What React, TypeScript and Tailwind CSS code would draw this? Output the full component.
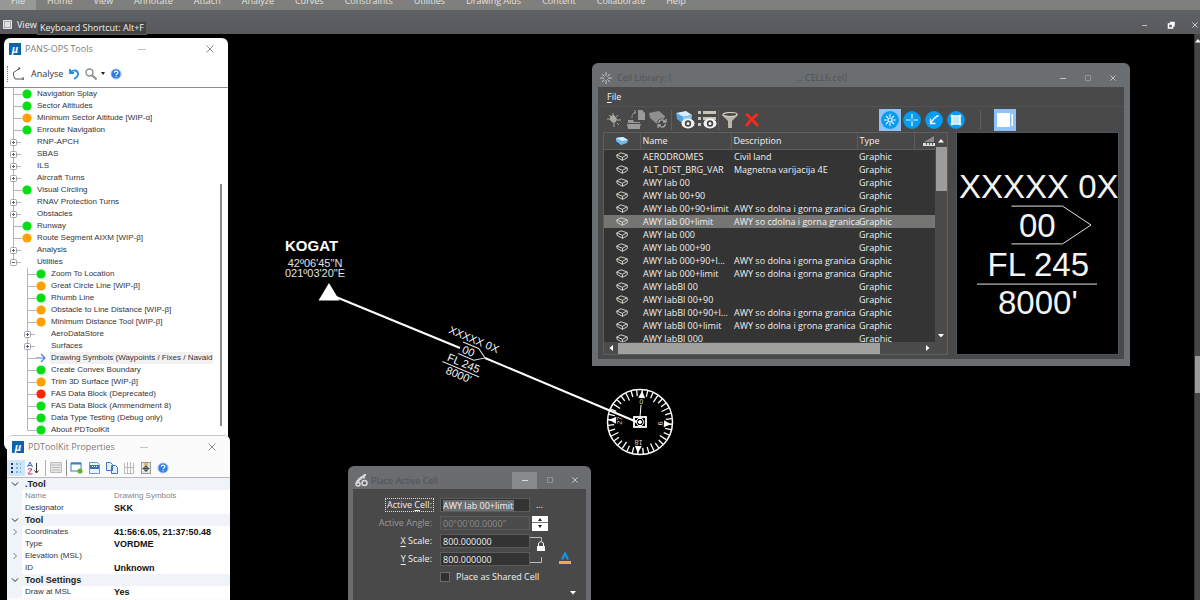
import { useState, type ReactNode } from "react";

const menuItems = [
  "Home", "View", "Annotate", "Attach", "Analyze", "Curves", "Constraints",
  "Utilities", "Drawing Aids", "Content", "Collaborate", "Help",
];

type TreeRow = {
  label: string;
  level?: number;
  kind: "green" | "orange" | "red" | "arrow" | "closed" | "open";
};

const tree: TreeRow[] = [
  { label: "Navigation Splay", kind: "green" },
  { label: "Sector Altitudes", kind: "green" },
  { label: "Minimum Sector Altitude [WIP-α]", kind: "orange" },
  { label: "Enroute Navigation", kind: "green" },
  { label: "RNP-APCH", kind: "closed" },
  { label: "SBAS", kind: "closed" },
  { label: "ILS", kind: "closed" },
  { label: "Aircraft Turns", kind: "closed" },
  { label: "Visual Circling", kind: "green" },
  { label: "RNAV Protection Turns", kind: "closed" },
  { label: "Obstacles", kind: "closed" },
  { label: "Runway", kind: "green" },
  { label: "Route Segment AIXM [WIP-β]", kind: "orange" },
  { label: "Analysis", kind: "closed" },
  { label: "Utilities", kind: "open" },
  { label: "Zoom To Location", level: 1, kind: "green" },
  { label: "Great Circle Line [WIP-β]", level: 1, kind: "orange" },
  { label: "Rhumb Line", level: 1, kind: "green" },
  { label: "Obstacle to Line Distance [WIP-β]", level: 1, kind: "orange" },
  { label: "Minimum Distance Tool [WIP-β]", level: 1, kind: "orange" },
  { label: "AeroDataStore", level: 1, kind: "closed" },
  { label: "Surfaces", level: 1, kind: "closed" },
  { label: "Drawing Symbols (Waypoints / Fixes / Navaid", level: 1, kind: "arrow" },
  { label: "Create Convex Boundary", level: 1, kind: "green" },
  { label: "Trim 3D Surface [WIP-β]", level: 1, kind: "orange" },
  { label: "FAS Data Block (Deprecated)", level: 1, kind: "red" },
  { label: "FAS Data Block (Ammendment 8)", level: 1, kind: "green" },
  { label: "Data Type Testing (Debug only)", level: 1, kind: "green" },
  { label: "About PDToolKit", level: 1, kind: "green" },
];

type Prop = { name: string; value?: string; group?: boolean; expand?: boolean; dim?: boolean };

const properties: Prop[] = [
  { name: ".Tool", group: true },
  { name: "Name", value: "Drawing Symbols", dim: true },
  { name: "Designator", value: "SKK" },
  { name: "Tool", group: true },
  { name: "Coordinates", value: "41:56:6.05, 21:37:50.48", expand: true },
  { name: "Type", value: "VORDME" },
  { name: "Elevation (MSL)", expand: true },
  { name: "ID", value: "Unknown" },
  { name: "Tool Settings", group: true },
  { name: "Draw at MSL", value: "Yes" },
];

const cells = [
  ["AERODROMES", "Civil land"],
  ["ALT_DIST_BRG_VAR", "Magnetna varijacija 4E"],
  ["AWY lab 00", ""],
  ["AWY lab 00+90", ""],
  ["AWY lab 00+90+limit", "AWY so dolna i gorna granica"],
  ["AWY lab 00+limit", "AWY so cdolna i gorna granica"],
  ["AWY lab 000", ""],
  ["AWY lab 000+90", ""],
  ["AWY lab 000+90+l...", "AWY so dolna i gorna granica"],
  ["AWY lab 000+limit", "AWY so dolna i gorna granica"],
  ["AWY labBl 00", ""],
  ["AWY labBl 00+90", ""],
  ["AWY labBl 00+90+l...", "AWY so dolna i gorna granica"],
  ["AWY labBl 00+limit", "AWY so dolna i grona granica"],
  ["AWY labBl 000", ""],
];

function MuLogo() {
  return (
    <span className="flex h-3 w-3 items-center justify-center bg-[#0b63ad] font-['Liberation_Sans',sans-serif] text-[11px] font-bold italic leading-none text-white">
      µ
    </span>
  );
}

function HelpIcon() {
  return (
    <svg width="12" height="12" viewBox="0 0 12 12">
      <circle cx="6" cy="6" r="5" fill="#2f7de6" stroke="#9cc3f3" />
      <path d="M4.3 4.8c0-2.2 3.6-2.2 3.6-.2C7.9 6 6.1 5.800 6.100 7.200M6.100 8.200v1" stroke="#fff" strokeWidth="1.200" fill="none" />
    </svg>
  );
}

function CloseIcon({ size = 8 }: { size?: number }) {
  return (
    <svg width={size} height={size} viewBox="0 0 8 8" stroke="currentColor" fill="none">
      <path d="M.5.5l7 7M7.500.5l-7 7" />
    </svg>
  );
}

/* Light tool windows */

function LightTitle({ title }: { title: string }) {
  return (
    <header className="flex h-[22px] shrink-0 items-center pl-[5px] pr-3.5 text-[9px] text-[#7c7c7c]">
      <MuLogo />
      <h2 className="ml-1">{title}</h2>
      <button aria-label="Minimize" className="ml-auto flex h-4 w-4 items-center justify-center">
        <span className="h-px w-2 bg-[#c4c4c4]" />
      </button>
      <button aria-label="Close" className="ml-14 text-[#8f8f8f]">
        <CloseIcon />
      </button>
    </header>
  );
}

function Guide({ kind, first, last }: { kind: TreeRow["kind"]; first: boolean; last: boolean }) {
  const box = kind === "closed" || kind === "open";
  return (
    <svg width="18" height="12" viewBox="0 0 18 12" className="shrink-0" fill="none">
      <path d={last ? "M9.500 0V6.500" : first ? "M9.500 -2V12" : "M9.500 0V12"} stroke="#b5b5b5" />
      <path d={box ? "M13 6.500H17" : "M10 6.500H18"} stroke="#b5b5b5" />
      {box && <rect x="6.500" y="3.500" width="6" height="6" rx="1" fill="#fff" stroke="#a0a4aa" />}
      {box && <path d="M8 6.500h3" stroke="#5a6273" />}
      {kind === "closed" && <path d="M9.500 5v3" stroke="#5a6273" />}
    </svg>
  );
}

function Marker({ kind }: { kind: TreeRow["kind"] }) {
  if (kind === "arrow") {
    return (
      <svg width="10" height="10" viewBox="0 0 10 10" fill="none" stroke="#4a80f0" strokeWidth="1.200">
        <path d="M0 5h9M5 1l4 4-4 4" />
      </svg>
    );
  }
  return (
    <svg width="10" height="10" viewBox="0 0 10 10">
      {kind === "green" && <circle cx="5" cy="5" r="4.600" fill="#06e012" />}
      {kind === "orange" && <circle cx="5" cy="5" r="4.600" fill="#ffa000" />}
      {kind === "red" && <circle cx="5" cy="5" r="4.600" fill="#ff2300" />}
    </svg>
  );
}

function ToolsWindow() {
  return (
    <section className="absolute left-1 top-1 flex h-[412px] w-56 flex-col overflow-hidden rounded-md bg-white">
      <LightTitle title="PANS-OPS Tools" />
      <div className="flex h-7 shrink-0 items-center border-b border-[#8e8e8e] pl-[3px] text-[9px] text-[#333]">
        <span className="h-4 border-l border-dotted border-[#777]" />
        <button className="ml-1 flex items-center gap-[7px]">
          <svg width="12" height="14" viewBox="0 0 12 14" fill="none" stroke="#555">
            <path d="M8 1L1.500 5.500v3L3 12h9M7 0v3M11 10v3" />
          </svg>
          Analyse
        </button>
        <button aria-label="Undo" className="ml-1.5">
          <svg width="10" height="12" viewBox="0 0 10 12" fill="none" stroke="#1a8fe3" strokeWidth="1.800">
            <path d="M1 1v4h4M1 5C4 1 9 2 9 6c0 3-2 4-4 5" />
          </svg>
        </button>
        <button aria-label="Find" className="ml-1.5 flex items-center gap-1">
          <svg width="12" height="12" viewBox="0 0 12 12" fill="none" stroke="#8c8c8c" strokeWidth="1.400">
            <circle cx="4.500" cy="4.500" r="3.500" />
            <path d="M7 7l4.500 4.500" strokeWidth="2" />
          </svg>
          <svg width="4" height="3" viewBox="0 0 4 3"><path d="M0 0h4L2 3z" fill="#222" /></svg>
        </button>
        <button aria-label="Help" className="ml-[5px]"><HelpIcon /></button>
      </div>
      <div className="flex min-h-0 flex-1">
        <ul className="min-w-0 flex-1 overflow-hidden font-['Liberation_Sans',sans-serif] text-[8px] leading-3 text-[#34343c]">
          {tree.map((row, i) => (
            <li key={row.label} className={row.level ? "flex h-3 items-center pl-3.5" : "flex h-3 items-center"}>
              <Guide kind={row.kind} first={i === 15} last={i === 14 || i === 28} />
              <span className="w-[10px] shrink-0"><Marker kind={row.kind} /></span>
              <button className={row.kind === "arrow" ? "ml-1 whitespace-nowrap bg-[#f1f1f1] pl-px" : "ml-[5px] whitespace-nowrap"}>
                {row.label}
              </button>
            </li>
          ))}
        </ul>
        <div className="flex w-3.5 flex-col items-center pb-6 pt-24">
          <span className="w-0.5 flex-1 bg-[#8b8b8b]" />
        </div>
      </div>
    </section>
  );
}

function Chevron({ open }: { open?: boolean }) {
  return (
    <svg width="8" height="8" viewBox="0 0 8 8" fill="none" stroke={open ? "#222" : "#777"} className="mx-auto">
      <path d={open ? "M1 2.500l3 3 3-3" : "M2.500 1l3 3-3 3"} />
    </svg>
  );
}

function PropertiesWindow() {
  return (
    <section className="absolute bottom-0 left-[7px] top-[401px] flex w-[223px] flex-col overflow-hidden rounded-t-md border-t border-[#c9c9c9] bg-[#fbfbfb]">
      <LightTitle title="PDToolKit Properties" />
      <div className="flex h-5 shrink-0 items-center border-b border-[#b8b8b8] text-[#333]">
        <button aria-label="Categorized" className="flex h-4 w-[18px] items-center justify-center bg-[#cfe6fa]">
          <svg width="12" height="12" viewBox="0 0 12 12">
            <path d="M1 1h2v2H1zM1 5h2v2H1zM1 9h2v2H1z" fill="#333" />
            <path d="M6 1h2v2H6zM6 5h2v2H6zM6 9h2v2H6zM10 1h1v2h-1zM10 5h1v2h-1zM10 9h1v2h-1z" fill="#7db4dd" />
          </svg>
        </button>
        <button aria-label="Alphabetical" className="ml-0.5">
          <svg width="12" height="14" viewBox="0 0 12 14" fill="none">
            <path d="M.5 6L3 1l2.500 5M1.500 4.500h3" stroke="#2f6fd0" />
            <path d="M1 8h4l-4 5h4.500" stroke="#c03060" />
            <path d="M9.500 2v10M7.500 9.500l2 2.500 2-2.500" stroke="#333" />
          </svg>
        </button>
        <span className="ml-1.5 h-4 w-px bg-[#b0b0b0]" />
        <button aria-label="Property pages" className="ml-1">
          <svg width="12" height="11" viewBox="0 0 12 11" fill="#e6e6e6" stroke="#bdbdbd">
            <path d="M.5.5h11v10H.5zM.5 3h11M2 5.500h8M2 8h8" />
          </svg>
        </button>
        <span className="ml-1 h-4 w-px bg-[#8f8f8f]" />
        <button aria-label="New window" className="ml-[3px]">
          <svg width="13" height="12" viewBox="0 0 13 12">
            <rect x="1" y="1" width="10" height="8" fill="#fff" stroke="#3c7fc4" />
            <path d="M1 1.500h10" stroke="#3c7fc4" strokeWidth="2" />
            <circle cx="10" cy="9" r="2.600" fill="#5bb531" />
          </svg>
        </button>
        <button aria-label="Save" className="ml-1.5">
          <svg width="11" height="12" viewBox="0 0 11 12">
            <path d="M.5.5h8l2 2v9H.5z" fill="#e9f1fa" stroke="#7398c4" />
            <path d="M1 3h9v4H1z" fill="#2f72b8" />
            <path d="M3 4.500h1M5 4.500h1M7 4.500h1" stroke="#fff" />
          </svg>
        </button>
        <button aria-label="Copy" className="ml-1.5">
          <svg width="12" height="12" viewBox="0 0 12 12" fill="#e4effb" stroke="#3f74c4">
            <path d="M.5.5h4l2 2v6h-6zM5.500 3.500h4l2 2v6h-6z" />
          </svg>
        </button>
        <button aria-label="Paste" className="ml-1.5">
          <svg width="10" height="12" viewBox="0 0 10 12" fill="none" stroke="#b9b9b9">
            <path d="M.5 1v10.500h9V1M3.500 0v11M6.500 0v11M.5 5.500h9" />
          </svg>
        </button>
        <button aria-label="Locate" className="ml-[7px]">
          <svg width="10" height="12" viewBox="0 0 10 12">
            <rect x=".5" y=".5" width="9" height="11" fill="#e8e8e8" stroke="#9b9b9b" />
            <path d="M3 1h4v2H3z" fill="#f0b840" />
            <circle cx="5" cy="6.500" r="2.200" fill="none" stroke="#444" />
            <path d="M5 3v7M1.500 6.500h7" stroke="#444" />
          </svg>
        </button>
        <button aria-label="Help" className="ml-1.5"><HelpIcon /></button>
      </div>
      <table className="w-full table-fixed border-collapse font-['Liberation_Sans',sans-serif] text-[8px] leading-3 text-[#34343c]">
        <colgroup>
          <col className="w-[15px]" />
          <col className="w-[92px]" />
          <col />
        </colgroup>
        <tbody>
          {properties.map((p) =>
            p.group ? (
              <tr key={p.name} className="h-3 bg-[#f0f4f9]">
                <td className="p-0"><Chevron open /></td>
                <th colSpan={2} className="p-0 pl-[3px] text-left text-[9px] font-bold text-[#222]">{p.name}</th>
              </tr>
            ) : (
              <tr key={p.name} className="h-3 bg-white">
                <td className="bg-[#f0f4f9] p-0">{p.expand && <Chevron />}</td>
                <th className={p.dim ? "p-0 pl-[3px] text-left font-normal text-[#83838a]" : "p-0 pl-[3px] text-left font-normal"}>{p.name}</th>
                <td className={p.dim ? "p-0 text-[#83838a]" : "p-0 text-[9px] font-bold text-[#111]"}>{p.value}</td>
              </tr>
            )
          )}
        </tbody>
      </table>
    </section>
  );
}

/* Drawing */

// Airway label cell, origin at the tip of the arrow. `s` is a third of the text height.
function AirwayLabel({ s }: { s: number }) {
  const p = (x: number, y: number) => `${x * s} ${y * s}`;
  return (
    <g fontSize={11 * s} fill="#f4f4f4">
      <text x={-44 * s} y={-9 * s}>XXXXX 0X</text>
      <text x={-24 * s} y={4 * s}>00</text>
      <text x={-34.500 * s} y={17 * s}>FL 245</text>
      <text x={-31 * s} y={29.500 * s}>8000'</text>
      <path
        d={`M${p(-26.500, -6.300)}L${p(-9.500, -6.300)}L${p(0, 0)}L${p(-9.500, 6.300)}L${p(-26.500, 6.300)}M${p(-38, 19.700)}L${p(2, 19.700)}`}
        fill="none"
        stroke="#e4e4e4"
      />
    </g>
  );
}

function CompassRose() {
  const ticks = Array.from({ length: 36 }, (_, i) => i * 10);
  return (
    <g transform="translate(640 388)" stroke="#fff" fill="none">
      <circle r="32.500" strokeWidth="1.500" />
      <g transform="rotate(4)">
        {ticks.map((a) => (
          <path key={a} d={a % 30 === 0 ? "M0 -32V-24" : "M0 -32V-26"} strokeWidth="1.300" transform={`rotate(${a})`} />
        ))}
        {[0, 90, 180, 270].map((a) => (
          <path key={a} d="M0 -31L3.500 -24H-3.500Z" fill="#fff" stroke="none" transform={`rotate(${a})`} />
        ))}
        <g fill="#ddd" stroke="none" fontSize="7" textAnchor="middle">
          <text y="-18">0</text>
          <text y="-18" transform="rotate(90)">9</text>
          <text y="-18" transform="rotate(180)">18</text>
          <text y="-18" transform="rotate(270)">27</text>
        </g>
      </g>
      <path d="M0 -5L1 -17" />
      <rect x="-6" y="-5" width="12" height="10" strokeWidth="1.800" />
      <path d="M-4 0l2-3.500h4l2 3.500-2 3.500h-4z" />
      <circle r="1.500" fill="#fff" />
    </g>
  );
}

function Drawing() {
  return (
    <svg className="absolute inset-0 h-full w-full font-['Liberation_Sans',sans-serif]">
      <g fill="#fff">
        <text x="285" y="217" fontSize="15" fontWeight="bold">KOGAT</text>
        <text x="315" y="233" fontSize="11" textAnchor="middle" fill="#e2e2e2">42º06'45"N</text>
        <text x="315" y="243" fontSize="11" textAnchor="middle" fill="#e2e2e2">021º03'20"E</text>
        <path d="M329 249L339.500 266.500H318.500Z" />
      </g>
      <path d="M336 263L460 314M485 324L637 388" stroke="#fff" strokeWidth="2" />
      <g transform="translate(485 324) rotate(22.700)">
        <AirwayLabel s={1} />
      </g>
      <CompassRose />
    </svg>
  );
}

/* Dark dialogs */

function ToolButton({ label, active, children }: { label: string; active?: boolean; children: ReactNode }) {
  return (
    <button
      aria-label={label}
      className={active ? "flex h-[22px] w-[22px] items-center justify-center bg-[#8fc3f7]" : "flex h-[22px] w-[22px] items-center justify-center"}
    >
      {children}
    </button>
  );
}

function RoundIcon({ children }: { children: ReactNode }) {
  return (
    <svg width="18" height="18" viewBox="0 0 18 18" fill="none" stroke="#e8f6ff" strokeWidth="1.200">
      <circle cx="9" cy="9" r="8.900" fill="#079cf0" stroke="none" />
      {children}
    </svg>
  );
}

function Arrow({ dir }: { dir: "up" | "down" | "left" | "right" }) {
  const d = { up: "M0 5.500h6L3 2z", down: "M0 1h6L3 4.500z", left: "M5 0v6L1.500 3z", right: "M1 0v6L4.500 3z" }[dir];
  return <svg width="6" height="6" viewBox="0 0 6 6"><path d={d} fill="#fff" /></svg>;
}

function CellLibrary({ selected, onSelect }: { selected: string; onSelect: (name: string) => void }) {
  return (
    <section className="absolute left-[592px] top-[29px] flex h-[303px] w-[538px] flex-col rounded-t-md bg-[#6b6e71] px-1.5 pb-[7px] text-[9px] text-[#f0f0f0]">
      <header className="flex h-6 shrink-0 items-center pl-0.5 pt-1.5">
        <svg width="12" height="12" viewBox="0 0 12 12" stroke="#c8c6c0" fill="none">
          <path d="M6 0v4M6 8v4M0 6h4M8 6h4M2 2l2.500 2.500M7.500 7.500L10 10M10 2L7.500 4.500M4.500 7.500L2 10" />
        </svg>
        <h2 className="ml-[5px] flex gap-[124px] text-[#505355]">
          <span>Cell Library: [</span>
          <span>... CELL6.cel]</span>
        </h2>
        <button aria-label="Minimize" className="ml-auto h-px w-1.5 bg-[#c0c0c0]" />
        <button aria-label="Maximize" className="ml-[19px] h-1.5 w-1.5 border border-[#8f9193]" />
        <button aria-label="Close" className="ml-[19px] mr-2 text-[#dedede]"><CloseIcon size={6} /></button>
      </header>

      <div className="flex min-h-0 flex-1 flex-col bg-[#494949]">
        <div className="flex h-[19px] shrink-0 items-center pl-[9px]">
          <button><span className="underline underline-offset-2">F</span>ile</button>
        </div>

        <div className="flex h-[26px] shrink-0 items-center border-t border-[#525252] pl-[5px]">
          <ToolButton label="Create cell">
            <svg width="16" height="16" viewBox="0 0 16 16" stroke="#aaa79f" fill="#aaa79f">
              <path d="M7 1v4M1 7h4M11 8h4M8 11v4M3 3l2 2M12 3l-3 3M11 11l2 2" />
              <path d="M4 4l4-1 3 4-1 3-3 1-3-3z" stroke="none" />
            </svg>
          </ToolButton>
          <ToolButton label="Import cell">
            <svg width="20" height="19" viewBox="0 0 20 19" fill="#9a9a9a">
              <path d="M12 0h4l3 3v7h-7zM2 10h5l1 2h6v7H2z" />
              <path d="M1 14h14l-2 5H2z" />
              <path d="M1 13.500h13" stroke="#494949" />
              <path d="M6 8c0-4 1-5 4-6M8 0l2 2-2 2" fill="none" stroke="#9a9a9a" />
            </svg>
          </ToolButton>
          <ToolButton label="Replace cell">
            <svg width="20" height="19" viewBox="0 0 20 19" fill="#8f8f8d">
              <path d="M1 3l10-2 6 5-2 6-6 2-7-6z" />
              <circle cx="14" cy="13.500" r="5" fill="#494949" />
              <path d="M10.500 13c1-4 5-4 7-1M17.500 14c-1 4-5 4-7 1M18 9v3h-3M10 18v-3h3" fill="none" stroke="#a8a8a6" strokeWidth="1.300" />
            </svg>
          </ToolButton>
          <span className="mx-0.5 h-5 w-px bg-[#5e5e5e]" />
          <ToolButton label="Show cells">
            <svg width="20" height="19" viewBox="0 0 20 19">
              <path d="M1 3l10-2 6 4-9 2z" fill="#d6efff" />
              <path d="M1 3l7 4-1 6-5-4z" fill="#4aa8ee" />
              <path d="M8 7l9-2-1 7-9 1z" fill="#8bcbf8" />
              <ellipse cx="13" cy="13.500" rx="6.500" ry="5" fill="#f4f4f4" />
              <circle cx="13" cy="13.500" r="3.200" fill="#444" />
              <circle cx="13" cy="13.500" r="1.500" fill="#fff" />
            </svg>
          </ToolButton>
          <ToolButton label="Show details">
            <svg width="20" height="19" viewBox="0 0 20 19" fill="#c9c3b8">
              <path d="M1 1h3v3H1zM6 1h13v3H6zM1 7h3v3H1zM6 7h13v3H6zM1 13h3v3H1z" />
              <ellipse cx="13" cy="13.500" rx="6.500" ry="5" fill="#f4f4f4" />
              <circle cx="13" cy="13.500" r="3.200" fill="#444" />
              <circle cx="13" cy="13.500" r="1.500" fill="#fff" />
            </svg>
          </ToolButton>
          <span className="h-5 w-px bg-[#5e5e5e]" />
          <ToolButton label="Filter">
            <svg width="16" height="16" viewBox="0 0 16 16" fill="#b9b5ab">
              <path d="M0 3l6 6v7h4V9l6-6z" />
              <ellipse cx="8" cy="2.500" rx="7" ry="2" fill="#494949" stroke="#d2cec4" strokeWidth="1.200" />
            </svg>
          </ToolButton>
          <ToolButton label="Delete">
            <svg width="14" height="14" viewBox="0 0 14 14" stroke="#f82a20" strokeWidth="2.800">
              <path d="M1 1c4 3 8 8 12 12M12.500 1C8 5 4 9 1 13" fill="none" />
            </svg>
          </ToolButton>

          <div className="ml-auto mr-[108px] flex items-center">
            <ToolButton label="Placement" active>
              <RoundIcon>
                <circle cx="9" cy="9" r="2" />
                <path d="M9 3v3M9 12v3M3 9h3M12 9h3M5 5l2 2M13 5l-2 2M5 13l2-2M13 13l-2-2" />
              </RoundIcon>
            </ToolButton>
            <ToolButton label="Point">
              <RoundIcon><path d="M9 3v4.500M9 10.500V15M3 9h4.500M10.500 9H15M8.500 9h1" /></RoundIcon>
            </ToolButton>
            <ToolButton label="Terminator">
              <RoundIcon><path d="M13.500 4.500c-3 1-5 3-7.500 7.500M5.500 7.500v5h5" strokeWidth="1.400" /></RoundIcon>
            </ToolButton>
            <ToolButton label="Pattern">
              <RoundIcon>
                <rect x="5" y="5" width="8" height="8" fill="#c4e6fb" />
                <path d="M3.500 5h11M3.500 13h11M5 3.500v11M13 3.500v11" />
              </RoundIcon>
            </ToolButton>
            <span className="mx-[13px] h-5 w-px bg-[#5e5e5e]" />
            <ToolButton label="Preview pane" active>
              <svg width="18" height="14" viewBox="0 0 18 14" fill="#fff">
                <path d="M1 0h13v14H1zM15.500 1h1.500v12h-1.500z" />
              </svg>
            </ToolButton>
          </div>
        </div>

        <div className="flex min-h-0 flex-1 px-[5px] pb-1">
          <div className="flex w-[345px] flex-col border border-[#5c5e60]">
            <div className="flex min-h-0 flex-1">
              <div className="min-w-0 flex-1 overflow-hidden bg-[#343434]">
                <table className="w-full table-fixed border-collapse whitespace-nowrap leading-[13px]">
                  <colgroup>
                    <col className="w-9" />
                    <col className="w-[91px]" />
                    <col className="w-[126px]" />
                    <col className="w-[57px]" />
                    <col />
                  </colgroup>
                  <thead>
                    <tr className="h-4 border-b border-[#5c5c5c] bg-[#484848] text-left">
                      <th className="border-r border-[#5c5c5c] p-0" aria-label="Kind">
                        <svg width="12" height="9" viewBox="0 0 12 9" className="mx-auto">
                          <path d="M0 2l7-1 5 3-1 3-6 2-5-4z" fill="#6bb9f2" />
                          <path d="M0 2l7-1 5 3-6 1z" fill="#d8f0ff" />
                        </svg>
                      </th>
                      <th className="border-r border-[#5c5c5c] p-0 pl-0.5 font-normal">Name</th>
                      <th className="border-r border-[#5c5c5c] p-0 pl-0.5 font-normal">Description</th>
                      <th className="border-r border-[#5c5c5c] p-0 pl-0.5 font-normal">Type</th>
                      <th className="p-0" aria-label="Scale">
                        <svg width="12" height="10" viewBox="0 0 12 10" className="ml-auto">
                          <path d="M1 6L11 0v6z" fill="#8a8a8a" />
                          <path d="M0 7h12v3H0z" fill="#ddd" />
                          <path d="M3.500 7v2M6.500 7v2M9.500 7v2" stroke="#555" />
                        </svg>
                      </th>
                    </tr>
                  </thead>
                  <tbody>
                    {cells.map(([name, description]) => (
                      <tr
                        key={name}
                        onClick={() => onSelect(name)}
                        className={name === selected ? "h-[13px] bg-[#757573]" : "h-[13px]"}
                      >
                        <td className="p-0">
                          <svg width="12" height="9" viewBox="0 0 12 9" className="mx-auto" fill="none" stroke="#cfcdc6">
                            <path d="M.7 3L5 .8l6 2L6.500 5.300zM.7 3l.5 2.500L6.500 8.300l4.700-2.500.2-3M6.500 5.300v3" />
                          </svg>
                        </td>
                        <td className="p-0 pl-[3px]">{name}</td>
                        <td className="p-0 pl-[3px]">{description}</td>
                        <td className="p-0 pl-0.5">Graphic</td>
                        <td className="p-0" />
                      </tr>
                    ))}
                  </tbody>
                </table>
              </div>
              <div className="flex w-3 flex-col items-center bg-[#4b4b4b]">
                <span className="flex h-3.5 items-center"><Arrow dir="up" /></span>
                <span className="h-11 w-[11px] bg-[#9c9c9c]" />
                <span className="mt-auto flex h-3 items-center"><Arrow dir="down" /></span>
              </div>
            </div>
            <div className="flex h-3 shrink-0 items-center bg-[#4b4b4b]">
              <span className="flex w-3.5 justify-center"><Arrow dir="left" /></span>
              <span className="h-[11px] w-[262px] bg-[#a0a09e]" />
              <span className="ml-auto mr-4"><Arrow dir="right" /></span>
            </div>
          </div>
          <svg className="ml-2 h-full flex-1 border border-[#4d565d] bg-black font-['Liberation_Sans',sans-serif]">
            <g transform="translate(134 92)"><AirwayLabel s={3} /></g>
          </svg>
        </div>
      </div>
    </section>
  );
}

function PlaceCell({ cell, onChange }: { cell: string; onChange: (name: string) => void }) {
  const [shared, setShared] = useState(false);
  return (
    <section className="absolute bottom-0 left-[348px] top-[432px] flex w-[243px] flex-col rounded-t-md bg-[#6a6c70] px-[5px] text-[9px] text-[#f0f0f0]">
      <header className="flex h-[23px] shrink-0 items-end pl-0.5">
        <svg width="14" height="14" viewBox="0 0 14 14" className="mb-0.5" fill="none" stroke="#d8d8d8" strokeWidth="1.500">
          <path d="M2 11c0-4 2-4 4-6s4-1 4-4" strokeWidth="2.500" />
          <circle cx="3" cy="11" r="2" />
          <circle cx="9.500" cy="10" r="2.500" />
          <path d="M7 4l3 1" />
        </svg>
        <h2 className="mb-0.5 ml-0.5 text-[#505255]">Place Active Cell</h2>
        <button aria-label="Minimize" className="ml-auto flex h-[17px] w-[25px] items-center justify-center bg-[#88898a]">
          <span className="h-px w-1.5 bg-[#ddd]" />
        </button>
        <button aria-label="Maximize" className="mb-1.5 ml-2.5 h-1.5 w-1.5 border border-[#8f9193]" />
        <button aria-label="Close" className="mb-1.5 ml-[19px] mr-2 text-[#e6e6e6]"><CloseIcon size={6} /></button>
      </header>

      <div className="flex-1 bg-[#494949] pt-[7px]">
        <div className="grid auto-rows-[18px] grid-cols-[81px_90px_1fr] items-center gap-x-1.5">
          <label htmlFor="cell" className="justify-self-end border border-dotted border-[#ddd] px-px leading-3">
            Active <span className="underline underline-offset-2">C</span>ell:
          </label>
          <div className="flex h-3.5 items-center border border-[#5c5c5c] bg-[#333] pl-0.5">
            <input
              id="cell"
              value={cell}
              onChange={(e) => onChange(e.target.value)}
              className="h-[11px] w-[71px] bg-[#6d6e70] leading-[11px] outline-none"
            />
          </div>
          <button aria-label="Browse cells" className="justify-self-start leading-3">...</button>

          <label htmlFor="angle" className="justify-self-end pr-0.5 text-[#9a9a9a]">Active Angle:</label>
          <input id="angle" disabled defaultValue={`00°00'00.0000"`} className="h-3.5 w-full border border-[#5c5c5c] bg-[#4b4b4b] pl-0.5 text-[#8c8c8c]" />
          <div className="-ml-1 flex h-[15px] w-4 flex-col justify-center divide-y divide-[#777] bg-white">
            <button aria-label="Increase angle" className="flex h-[7px] items-center justify-center">
              <svg width="4" height="3" viewBox="0 0 4 3"><path d="M0 3h4L2 0z" fill="#222" /></svg>
            </button>
            <button aria-label="Decrease angle" className="flex h-[7px] items-center justify-center">
              <svg width="4" height="3" viewBox="0 0 4 3"><path d="M0 0h4L2 3z" fill="#222" /></svg>
            </button>
          </div>

          <label htmlFor="xs" className="justify-self-end pr-0.5"><span className="underline underline-offset-2">X</span> Scale:</label>
          <input id="xs" defaultValue="800.000000" className="h-3.5 w-full border border-[#5c5c5c] bg-[#333] pl-0.5" />
          <div className="row-span-2 -ml-1.5 flex h-9 items-end">
            <button aria-label="Lock scale" className="h-9">
              <svg width="16" height="36" viewBox="0 0 16 36" fill="none" stroke="#bdbdbd">
                <path d="M0 5.500h11.500V9M0 30.500h11.500V25" />
                <path d="M8.500 14v-2c0-3 5-3 5 0v2" stroke="#fff" />
                <path d="M7 14h8v5H7z" fill="#fff" stroke="none" />
              </svg>
            </button>
            <button aria-label="Annotation scale" className="mb-1 ml-3">
              <svg width="14" height="12" viewBox="0 0 14 12">
                <path d="M4 7.500l3-6 3 6" fill="none" stroke="#1795e0" strokeWidth="2.200" />
                <path d="M1 9h12v3H1z" fill="#e8ad52" />
              </svg>
            </button>
          </div>

          <label htmlFor="ys" className="justify-self-end pr-0.5"><span className="underline underline-offset-2">Y</span> Scale:</label>
          <input id="ys" defaultValue="800.000000" className="h-3.5 w-full border border-[#5c5c5c] bg-[#333] pl-0.5" />

          <label className="col-span-2 col-start-2 flex items-center gap-1.5">
            <input
              type="checkbox"
              checked={shared}
              onChange={(e) => setShared(e.target.checked)}
              className="h-2.5 w-2.5 appearance-none border border-[#6c6c6c] bg-[#303030] checked:bg-[#079cf0]"
            />
            Place as Shared Cell
          </label>
        </div>
        <button aria-label="More options" className="ml-auto mr-2.5 mt-1 block"><Arrow dir="down" /></button>
      </div>
    </section>
  );
}

export default function App() {
  const [cell, setCell] = useState("AWY lab 00+limit");

  return (
    <div className="flex h-screen flex-col overflow-hidden bg-black font-['Open_Sans','Noto_Sans',sans-serif]">
      {/* Ribbon tabs, scrolled mostly out of the window */}
      <nav className="flex h-2.5 shrink-0 items-end overflow-hidden bg-[#7f7f7d] text-[9px] leading-[18px] text-[#e4e2de]">
        <button className="mr-[11px] w-9 bg-[#989896]">File</button>
        <div className="flex gap-[21px]">
          {menuItems.map((item) => (
            <button key={item} className="whitespace-nowrap">{item}</button>
          ))}
        </div>
      </nav>

      {/* View title */}
      <header className="relative z-10 flex h-6 shrink-0 items-center bg-linear-to-b from-[#5d6265] to-[#59595e] pl-[3px] pt-1.5 text-[9px] text-[#eee]">
        <svg width="10" height="10" viewBox="0 0 10 10" stroke="#e5e5e5" fill="#a8a8a8">
          <path d="M.5.5h8v8h-8z" />
          <path d="M2.500 2.500h4v4h-4z" fill="#ddd" />
        </svg>
        <span className="ml-1">View</span>
        <div role="tooltip" className="absolute left-[37px] top-[11px] h-3.5 border border-[#5a5a5a] bg-[#444] px-0.5 leading-3">
          Keyboard Shortcut: Alt+F
        </div>
        <button aria-label="Minimize view" className="ml-auto h-px w-[5px] bg-[#c4b8a8]" />
        <button aria-label="Restore view" className="ml-5">
          <svg width="8" height="8" viewBox="0 0 8 8" fill="none" stroke="#fff" strokeWidth="1.500">
            <path d="M1.500 3h4v4h-4zM3 1.500h4v4" />
          </svg>
        </button>
        <button aria-label="Close view" className="ml-[17px] mr-0.5"><CloseIcon size={6} /></button>
      </header>

      <main className="relative min-h-0 flex-1">
        <Drawing />
        <div className="absolute inset-y-0 right-0 flex w-1.5 flex-col items-center overflow-hidden border-l border-[#333] bg-[#454545]">
          <span className="flex h-3 shrink-0 items-center"><Arrow dir="up" /></span>
          <span className="mt-[310px] h-[37px] w-full shrink-0 bg-[#9b9b9b]" />
        </div>
        <ToolsWindow />
        <PropertiesWindow />
        <CellLibrary selected={cell} onSelect={setCell} />
        <PlaceCell cell={cell} onChange={setCell} />
      </main>
    </div>
  );
}
